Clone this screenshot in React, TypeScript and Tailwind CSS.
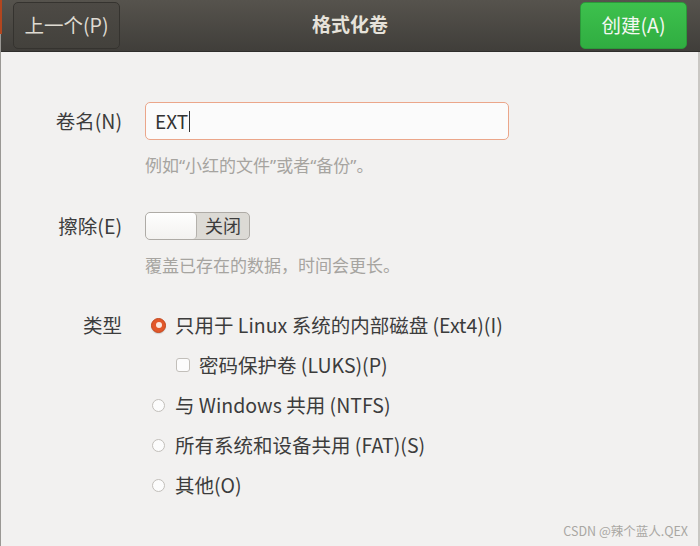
import React from "react";

const font = { fontFamily: '"Noto Sans CJK SC", "Noto Sans", sans-serif' };
const latin = { fontFamily: '"Noto Sans", sans-serif' };

function Radio({ checked }: { checked?: boolean }) {
  if (checked)
    return (
      <span className="flex h-[15px] w-[15px] shrink-0 items-center justify-center rounded-full bg-[#e2582b] border border-[#c4471d] shadow-[0_1px_1px_rgba(0,0,0,0.15)]">
        <span className="h-[6px] w-[6px] rounded-full bg-[#fbe9e1]" />
      </span>
    );
  return <span className="ml-[1px] mr-[1px] h-[13px] w-[13px] shrink-0 rounded-full border border-[#c2bfba] bg-[#fcfcfc]" />;
}

export default function App() {
  return (
    <div className="relative h-[546px] w-[700px] overflow-hidden bg-[#f2f1f0] text-[#3c3c3c]" style={font}>
      <div className="absolute left-0 top-0 h-[34px] w-[2px] bg-[#b2461f]" />
      <div className="absolute left-0 top-[34px] h-[512px] w-[1px] bg-[#9a9894]" />
      <div className="absolute right-0 top-[52px] h-[494px] w-[2px] bg-[#c9c7c3]" />
      {/* header */}
      <div className="flex h-[52px] items-center justify-between border-b border-[#2f2e2b] bg-gradient-to-b from-[#56534d] to-[#403e3a] pl-[13px] pr-[13px]">
        <div className="flex h-[47px] w-[107px] items-center justify-center rounded-[5px] border border-[#35332f] bg-gradient-to-b from-[#4d4a45] to-[#43413c] pb-[2px] text-[19.5px] text-[#dfdbd2]">
          上一个(P)
        </div>
        <div className="pb-[2px] text-[19px] font-bold text-[#e6e2da]">格式化卷</div>
        <div className="flex h-[47px] w-[107px] items-center justify-center rounded-[5px] border border-[#2b9a39] bg-gradient-to-b from-[#3dc14d] to-[#30ad41] pb-[2px] text-[19.5px] text-[#f4f7f2]">
          创建(A)
        </div>
      </div>

      {/* body */}
      <div className="flex flex-col pt-[50px]">
        <div className="flex items-center">
          <div className="w-[122px] text-right text-[19.5px] leading-[24px]">卷名(N)</div>
          <div className="ml-[23px] flex h-[38px] w-[364px] items-center rounded-[5px] border border-[#eba68a] bg-[#fbfbfb] pl-[9px] text-[19px] text-[#333]">
            EXT<span className="ml-[1px] h-[21px] w-[1px] bg-[#333]" />
          </div>
        </div>
        <div className="ml-[145px] mt-[13px] text-[17px] leading-[24px] text-[#a6a4a0]">
          例如<span style={latin}>“</span>小红的文件<span style={latin}>”</span>或者<span style={latin}>“</span>备份<span style={latin}>”</span>。
        </div>

        <div className="mt-[34px] flex items-center">
          <div className="w-[122px] text-right text-[19.5px] leading-[24px]">擦除(E)</div>
          <div className="ml-[23px] flex h-[28px] w-[105px] overflow-hidden rounded-[5px] border border-[#aeaba6] bg-[#dcdad5]">
            <div className="h-full w-[51px] rounded-[4px] border-r border-[#b4b1ac] bg-gradient-to-b from-[#fefefe] to-[#f3f2f0]" />
            <div className="flex flex-1 items-center justify-center pb-[1px] text-[18px] text-[#3c3c3c]">关闭</div>
          </div>
        </div>
        <div className="ml-[145px] mt-[13px] text-[17px] leading-[24px] text-[#a6a4a0]">覆盖已存在的数据，时间会更长。</div>

        <div className="mt-[36px] flex">
          <div className="w-[122px] text-right text-[19.5px] leading-[24px]">类型</div>
          <div className="ml-[29px] flex flex-col text-[19.5px] leading-[24px]">
            <div className="flex h-[24px] items-center gap-[9px]">
              <Radio checked />
              <span>只用于 Linux 系统的内部磁盘 (Ext4)(I)</span>
            </div>
            <div className="ml-[25px] mt-[16px] flex h-[24px] items-center gap-[9px]">
              <span className="h-[14px] w-[14px] rounded-[3px] border border-[#c2bfba] bg-[#fcfcfc]" />
              <span>密码保护卷 (LUKS)(P)</span>
            </div>
            <div className="mt-[16px] flex h-[24px] items-center gap-[9px]">
              <Radio />
              <span>与 Windows 共用 (NTFS)</span>
            </div>
            <div className="mt-[16px] flex h-[24px] items-center gap-[9px]">
              <Radio />
              <span>所有系统和设备共用 (FAT)(S)</span>
            </div>
            <div className="mt-[16px] flex h-[24px] items-center gap-[9px]">
              <Radio />
              <span>其他(O)</span>
            </div>
          </div>
        </div>
      </div>

      <div className="absolute bottom-[5px] right-[12px] text-[12.5px] text-[#a9a7a3]">CSDN @辣个蓝人.QEX</div>
    </div>
  );
}
